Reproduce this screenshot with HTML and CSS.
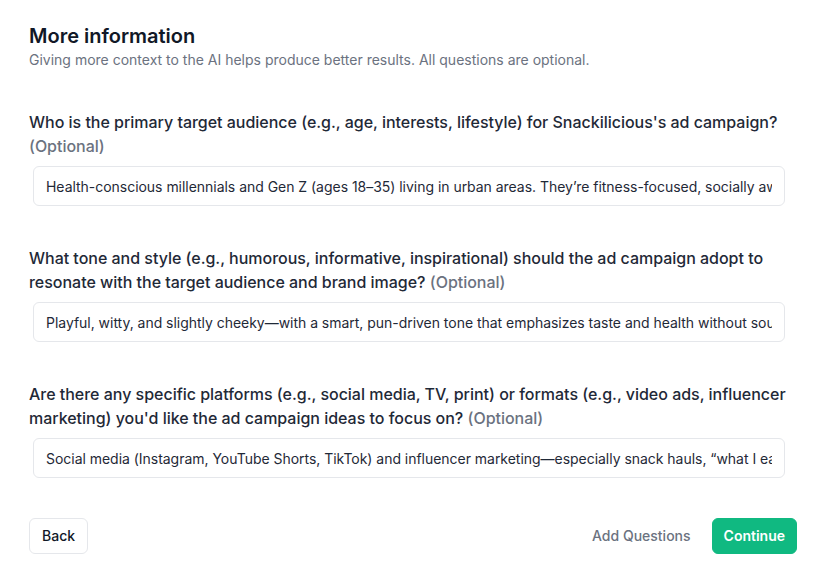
FILE: index.html
```html
<!DOCTYPE html>
<html lang="en">
<head>
<meta charset="utf-8">
<title>More information</title>
<link rel="stylesheet" href="styles.css">
</head>
<body>
<main class="page">
  <header class="header">
    <h1 class="title">More information</h1>
    <p class="subtitle">Giving more context to the AI helps produce better results. All questions are optional.</p>
  </header>
  <div class="questions">
    <div class="question">
      <label class="label">Who is the primary target audience (e.g., age, interests, lifestyle) for Snackilicious's ad campaign? <span class="optional">(Optional)</span></label>
      <input class="field" type="text" value="Health-conscious millennials and Gen Z (ages 18–35) living in urban areas. They’re fitness-focused, socially aware, and always on the go.">
    </div>
    <div class="question">
      <label class="label">What tone and style (e.g., humorous, informative, inspirational) should the ad campaign adopt to resonate with the target audience and brand image? <span class="optional">(Optional)</span></label>
      <input class="field" type="text" value="Playful, witty, and slightly cheeky—with a smart, pun-driven tone that emphasizes taste and health without sounding preachy.">
    </div>
    <div class="question">
      <label class="label">Are there any specific platforms (e.g., social media, TV, print) or formats (e.g., video ads, influencer marketing) you'd like the ad campaign ideas to focus on? <span class="optional">(Optional)</span></label>
      <input class="field" type="text" value="Social media (Instagram, YouTube Shorts, TikTok) and influencer marketing—especially snack hauls, “what I eat in a day” videos.">
    </div>
  </div>
  <footer class="actions">
    <button class="btn btn-back" type="button">Back</button>
    <div class="actions-right">
      <button class="btn btn-ghost" type="button">Add Questions</button>
      <button class="btn btn-primary" type="button">Continue</button>
    </div>
  </footer>
</main>
</body>
</html>
```

FILE: styles.css
```css
* { box-sizing: border-box; }

html, body {
  margin: 0;
  background: #ffffff;
}

body {
  font-family: Inter, "Noto Sans", "Liberation Sans", sans-serif;
  color: #1f2937;
  -webkit-font-smoothing: antialiased;
}

.page {
  padding: 22px 42px 0 29px;
  display: flex;
  flex-direction: column;
}

.header {
  display: flex;
  flex-direction: column;
}

.title {
  margin: 0;
  font-size: 20px;
  line-height: 28px;
  font-weight: 600;
  color: #111827;
}

.subtitle {
  margin: 0;
  font-size: 14px;
  line-height: 20px;
  color: #6b7280;
}

.questions {
  margin-top: 40px;
  padding-right: 8px;
  display: flex;
  flex-direction: column;
  gap: 40px;
}

.question {
  display: flex;
  flex-direction: column;
  gap: 8px;
}

.label {
  font-size: 16px;
  line-height: 24px;
  font-weight: 500;
  letter-spacing: -0.02px;
  color: #1f2937;
}

.optional {
  color: #6b7280;
  font-weight: 500;
}

.field {
  margin: 0 4px;
  height: 40px;
  padding: 10px 12px;
  border: 1px solid #e5e7eb;
  border-radius: 6px;
  background: #fff;
  font-family: inherit;
  font-size: 14px;
  line-height: 20px;
  letter-spacing: -0.03px;
  color: #1f2937;
  outline: none;
}

.actions {
  margin-top: 40px;
  display: flex;
  justify-content: space-between;
  align-items: center;
}

.actions-right {
  display: flex;
  align-items: center;
  gap: 8px;
}

.btn {
  font-family: inherit;
  font-size: 14px;
  line-height: 20px;
  font-weight: 500;
  padding: 7px 12px;
  border-radius: 6px;
  border: 1px solid transparent;
  background: transparent;
  cursor: pointer;
}

.btn-back {
  border-color: #e5e7eb;
  background: #fff;
  color: #111827;
}

.btn-ghost {
  color: #6b7280;
}

.btn-primary {
  padding: 7px 11px;
  background: #10b981;
  border-color: #10b981;
  color: #fff;
  font-weight: 600;
}
```
